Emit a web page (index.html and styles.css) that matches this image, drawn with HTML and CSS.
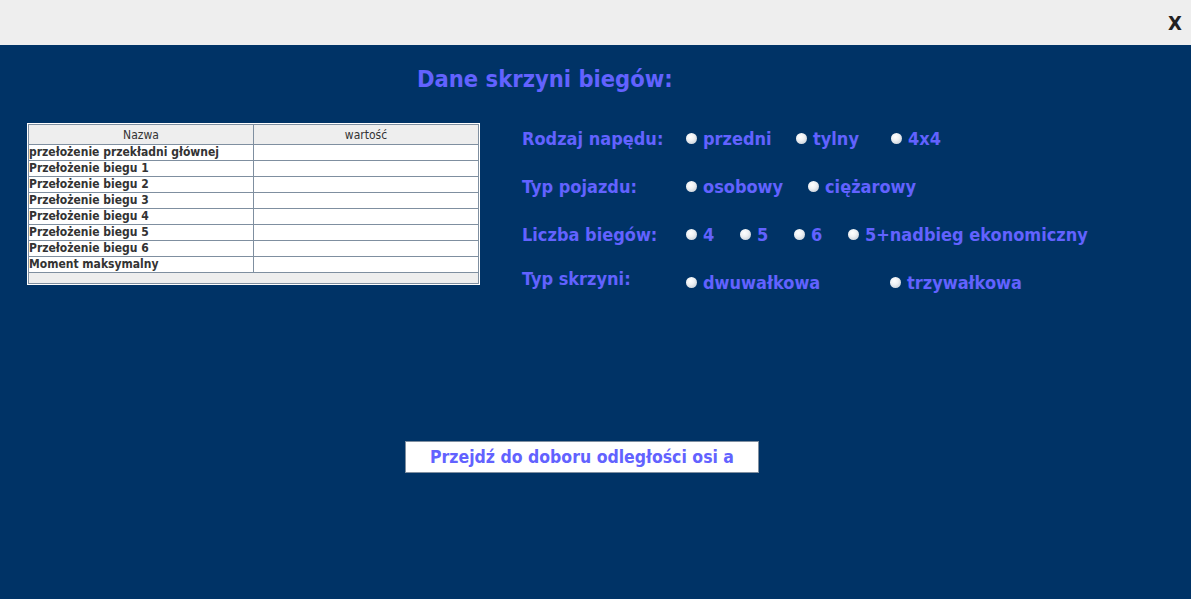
FILE: index.html
```html
<!DOCTYPE html>
<html lang="pl">
<head>
<meta charset="utf-8">
<title>Dane skrzyni biegów</title>
<link rel="stylesheet" href="styles.css">
</head>
<body>
<div class="topbar"><span class="close">X</span></div>
<main class="main">
  <h1 class="title">Dane skrzyni biegów:</h1>
  <div class="content">
    <div class="table-wrap">
      <div class="table-inner">
        <table class="grid">
          <thead>
            <tr><th>Nazwa</th><th>wartość</th></tr>
          </thead>
          <tbody>
            <tr><td>przełożenie przekładni głównej</td><td></td></tr>
            <tr><td>Przełożenie biegu 1</td><td></td></tr>
            <tr><td>Przełożenie biegu 2</td><td></td></tr>
            <tr><td>Przełożenie biegu 3</td><td></td></tr>
            <tr><td>Przełożenie biegu 4</td><td></td></tr>
            <tr><td>Przełożenie biegu 5</td><td></td></tr>
            <tr><td>Przełożenie biegu 6</td><td></td></tr>
            <tr><td>Moment maksymalny</td><td></td></tr>
          </tbody>
        </table>
        <div class="table-foot"></div>
      </div>
    </div>
    <div class="form">
      <div class="row">
        <span class="label">Rodzaj napędu:</span>
        <span class="opt w110"><i class="radio"></i>przedni</span>
        <span class="opt w95"><i class="radio"></i>tylny</span>
        <span class="opt"><i class="radio"></i>4x4</span>
      </div>
      <div class="row">
        <span class="label">Typ pojazdu:</span>
        <span class="opt w122"><i class="radio"></i>osobowy</span>
        <span class="opt"><i class="radio"></i>ciężarowy</span>
      </div>
      <div class="row">
        <span class="label">Liczba biegów:</span>
        <span class="opt w54"><i class="radio"></i>4</span>
        <span class="opt w54"><i class="radio"></i>5</span>
        <span class="opt w54"><i class="radio"></i>6</span>
        <span class="opt"><i class="radio"></i>5+nadbieg ekonomiczny</span>
      </div>
      <div class="row">
        <span class="label up">Typ skrzyni:</span>
        <span class="opt w204"><i class="radio"></i>dwuwałkowa</span>
        <span class="opt"><i class="radio"></i>trzywałkowa</span>
      </div>
    </div>
  </div>
  <div class="actions">
    <button class="btn" type="button">Przejdź do doboru odległości osi a</button>
  </div>
</main>
</body>
</html>
```

FILE: styles.css
```css
html, body {
  margin: 0;
  padding: 0;
  height: 100%;
}
body {
  font-family: Tahoma, "DejaVu Sans Condensed", "DejaVu Sans", sans-serif;
  background: #003366;
  display: flex;
  flex-direction: column;
}
.topbar {
  height: 45px;
  background: #eeeeee;
  display: flex;
  justify-content: flex-end;
  align-items: center;
  flex-shrink: 0;
}
.close {
  font-weight: bold;
  font-size: 20px;
  color: #222222;
  margin-right: 9px;
}
.main {
  flex: 1;
  background: #003366;
  display: flex;
  flex-direction: column;
}
.title {
  margin: 20px 0 0 417px;
  font-size: 23.5px;
  line-height: 28px;
  font-weight: bold;
  color: #6262ff;
}
.content {
  display: flex;
  align-items: flex-start;
  margin-top: 21px;
}
.table-wrap {
  margin: 9px 0 0 27px;
  border: 1px solid #ffffff;
  width: 451px;
}
.table-inner {
  border: 1px solid #7f8fa0;
  background: #eeeeee;
}
.grid {
  width: 100%;
  border-collapse: collapse;
  font-size: 12px;
  color: #333333;
  table-layout: fixed;
}
.grid th {
  font-weight: normal;
  height: 19px;
  padding: 0;
  background: #eeeeee;
  border-right: 1px solid #7f8fa0;
  border-bottom: 1px solid #7f8fa0;
}
.grid th:last-child { border-right: none; }
.grid td {
  height: 15px;
  padding: 0;
  font-weight: bold;
  line-height: 15px;
  background: #ffffff;
  white-space: nowrap;
  border-right: 1px solid #7f8fa0;
  border-bottom: 1px solid #7f8fa0;
}
.grid td:last-child { border-right: none; }
.table-foot {
  height: 10px;
  background: #eeeeee;
}
.form {
  margin-left: 42px;
  display: flex;
  flex-direction: column;
}
.row {
  height: 48px;
  display: flex;
  align-items: center;
  font-size: 18px;
  font-weight: bold;
  color: #6262ff;
}
.label {
  width: 164px;
}
.label.up {
  margin-bottom: 8px;
}
.opt {
  display: inline-flex;
  align-items: center;
  white-space: nowrap;
}
.w110 { width: 110px; }
.w95 { width: 95px; }
.w122 { width: 122px; }
.w54 { width: 54px; }
.w204 { width: 204px; }
.radio {
  display: inline-block;
  width: 11px;
  height: 11px;
  border-radius: 50%;
  margin-right: 6px;
  background: radial-gradient(circle at 40% 35%, #ffffff 0%, #eef1f4 40%, #b9c3ce 100%);
}
.actions {
  margin: 135px 0 0 405px;
}
.btn {
  width: 354px;
  height: 32px;
  background: #ffffff;
  border: 1px solid #7f8fa0;
  font-family: inherit;
  font-size: 17.5px;
  font-weight: bold;
  color: #6262ff;
  padding: 0;
  cursor: pointer;
}
```
